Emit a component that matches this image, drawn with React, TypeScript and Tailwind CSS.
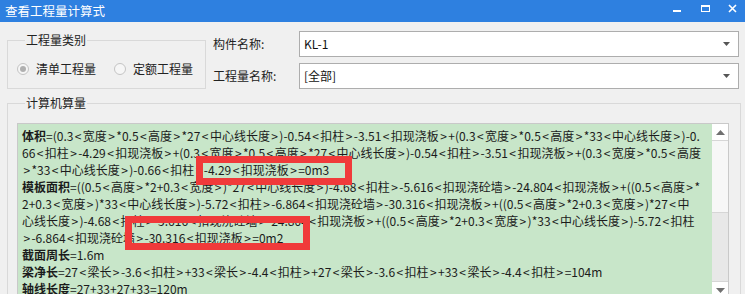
import React from 'react';

const FONT = '"Microsoft YaHei", "Noto Sans CJK SC", "Noto Sans", sans-serif';

const lines: { label?: string; text: string }[] = [
  { label: '体积', text: '=(0.3<宽度>*0.5<高度>*27<中心线长度>)-0.54<扣柱>-3.51<扣现浇板>+(0.3<宽度>*0.5<高度>*33<中心线长度>)-0.' },
  { text: '66<扣柱>-4.29<扣现浇板>+(0.3<宽度>*0.5<高度>*27<中心线长度>)-0.54<扣柱>-3.51<扣现浇板>+(0.3<宽度>*0.5<高度' },
  { text: '>*33<中心线长度>)-0.66<扣柱>-4.29<扣现浇板>=0m3' },
  { label: '模板面积', text: '=((0.5<高度>*2+0.3<宽度>)*27<中心线长度>)-4.68<扣柱>-5.616<扣现浇砼墙>-24.804<扣现浇板>+((0.5<高度>*' },
  { text: '2+0.3<宽度>)*33<中心线长度>)-5.72<扣柱>-6.864<扣现浇砼墙>-30.316<扣现浇板>+((0.5<高度>*2+0.3<宽度>)*27<中' },
  { text: '心线长度>)-4.68<扣柱>-5.616<扣现浇砼墙>-24.804<扣现浇板>+((0.5<高度>*2+0.3<宽度>)*33<中心线长度>)-5.72<扣柱' },
  { text: '>-6.864<扣现浇砼墙>-30.316<扣现浇板>=0m2' },
  { label: '截面周长', text: '=1.6m' },
  { label: '梁净长', text: '=27<梁长>-3.6<扣柱>+33<梁长>-4.4<扣柱>+27<梁长>-3.6<扣柱>+33<梁长>-4.4<扣柱>=104m' },
  { label: '轴线长度', text: '=27+33+27+33=120m' },
];

// the angle brackets sit with a little air around them, like the original font
function Formula({ text }: { text: string }) {
  return (
    <>
      {text.split(/([<>])/).map((part, i) =>
        part === '<' || part === '>' ? (
          <span key={i} className="mx-[1.4px]">{part}</span>
        ) : (
          <React.Fragment key={i}>{part}</React.Fragment>
        )
      )}
    </>
  );
}

function Radio({ checked, label }: { checked?: boolean; label: string }) {
  return (
    <div className="flex items-center gap-[7px]">
      <span className="flex h-[12px] w-[12px] items-center justify-center rounded-full border border-[#c4c4c4] bg-[#f6f6f6]">
        {checked && <span className="h-[6px] w-[6px] rounded-full bg-[#b0b0b0]" />}
      </span>
      <span className="text-[12px] leading-[16px] text-[#222]">{label}</span>
    </div>
  );
}

function Combo({ value }: { value: string }) {
  return (
    <div className="flex h-[26px] w-[440px] items-center justify-between border border-[#adadad] bg-white pl-[4px] pr-[8px]">
      <span className="text-[12px] text-[#111]">{value}</span>
      <svg width="7" height="4" viewBox="0 0 7 4">
        <path d="M0 0H7L3.5 4Z" fill="#555" />
      </svg>
    </div>
  );
}

export default function App() {
  return (
    <div className="flex h-[294px] w-[745px] flex-col overflow-hidden bg-[#f0f0f0]" style={{ fontFamily: FONT }}>
      {/* Title bar */}
      <div className="flex h-[22px] shrink-0 items-center justify-between bg-[#2e80e0] pl-[5px]">
        <span className="text-[12.5px] leading-none text-white">查看工程量计算式</span>
        <div className="flex items-center">
          <svg width="30" height="22" viewBox="0 0 30 22">
            <rect x="5" y="10" width="8" height="2" fill="#fff" />
          </svg>
          <svg width="28" height="22" viewBox="0 0 28 22">
            <rect x="3.5" y="5.5" width="8" height="6" fill="none" stroke="#fff" strokeWidth="1" />
            <rect x="3" y="5" width="9" height="2" fill="#fff" />
          </svg>
          <svg width="19" height="22" viewBox="0 0 19 22">
            <path d="M3 5L10 12M10 5L3 12" stroke="#fff" strokeWidth="1.6" />
          </svg>
        </div>
      </div>

      {/* Top area */}
      <div className="flex shrink-0">
        <fieldset className="ml-[7px] mt-[10px] w-[199px] border border-[#d9d9d9] pb-[10px] pl-[9px] pt-[13px]">
          <legend className="ml-[8px] px-[1px] text-[12px] leading-[16px] text-[#222]">工程量类别</legend>
          <div className="flex gap-[18px]">
            <Radio checked label="清单工程量" />
            <Radio label="定额工程量" />
          </div>
        </fieldset>
        <div className="ml-[7px] mt-[9px] flex flex-col gap-[6px]">
          <div className="flex items-center">
            <span className="w-[86px] text-[12px] text-[#222]">构件名称:</span>
            <Combo value="KL-1" />
          </div>
          <div className="flex items-center">
            <span className="w-[86px] text-[12px] text-[#222]">工程量名称:</span>
            <Combo value="[全部]" />
          </div>
        </div>
      </div>

      {/* Computer quantity group */}
      <fieldset className="relative ml-[7px] mt-[6px] w-[734px] shrink-0 border border-[#d9d9d9] pl-[9px] pr-[11px] pt-[12px]">
        <legend className="ml-[8px] px-[1px] text-[12px] leading-[16px] text-[#222]">计算机算量</legend>
        <div className="flex h-[176px] border border-[#c9c9c9]">
          <div className="flex-1 overflow-hidden bg-[#c8e6c9] pl-[4px] pt-[3px] text-[12px] leading-[17px] text-[#1b1b1b]">
            {lines.map((l, i) => (
              <div key={i} className="whitespace-nowrap">
                {l.label && <span className="font-bold">{l.label}</span>}
                <Formula text={l.text} />
              </div>
            ))}
          </div>
          <div className="flex w-[16px] flex-col bg-[#e8e8e8]">
            <div className="flex h-[17px] items-center justify-center border-b border-[#d6d6d6] bg-white">
              <svg width="9" height="5" viewBox="0 0 9 5">
                <path d="M0 5H9L4.5 0Z" fill="#707070" />
              </svg>
            </div>
            <div className="h-[72px] border-b border-[#d6d6d6] bg-[#f7f7f7]" />
            <div className="flex-1" />
            <div className="flex h-[17px] items-center justify-center border-t border-[#d6d6d6] bg-white">
              <svg width="9" height="5" viewBox="0 0 9 5">
                <path d="M0 0H9L4.5 5Z" fill="#707070" />
              </svg>
            </div>
          </div>
        </div>

        {/* highlight boxes */}
        <div className="pointer-events-none absolute left-[188px] top-[45px] h-[29px] w-[156px] border-[7px] border-[#f03a3a]" />
        <div className="pointer-events-none absolute left-[117px] top-[105px] h-[34px] w-[185px] border-[7px] border-[#f03a3a]" />
      </fieldset>
    </div>
  );
}
